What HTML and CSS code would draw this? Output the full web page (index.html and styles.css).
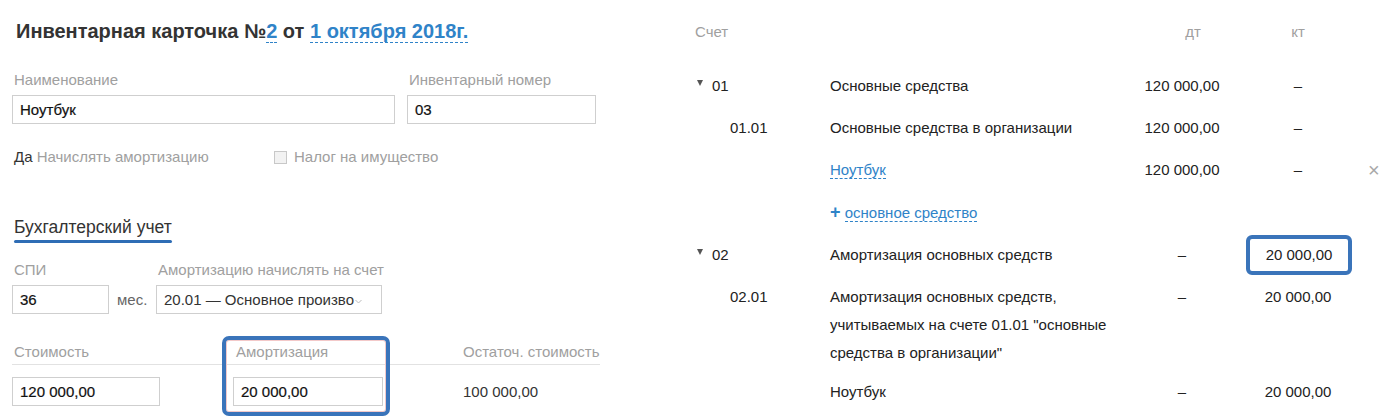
FILE: index.html
```html
<!DOCTYPE html>
<html lang="ru">
<head>
<meta charset="utf-8">
<link rel="stylesheet" href="styles.css">
</head>
<body>
<div class="page">
  <section class="left">
    <h1 class="title">Инвентарная карточка №<span class="dash">2</span> от <span class="dash">1 октября 2018г.</span></h1>

    <div class="row r1">
      <div class="field f-name">
        <div class="label">Наименование</div>
        <div class="input">Ноутбук</div>
      </div>
      <div class="field f-inv">
        <div class="label">Инвентарный номер</div>
        <div class="input">03</div>
      </div>
    </div>

    <div class="row r2">
      <div class="opt"><span class="dark">Да</span> Начислять амортизацию</div>
      <div class="chk"><span class="box"></span>Налог на имущество</div>
    </div>

    <div class="tab">Бухгалтерский учет</div>

    <div class="row r3">
      <div class="field f-spi">
        <div class="label">СПИ</div>
        <div class="spi-line">
          <div class="input spi">36</div>
          <span class="unit">мес.</span>
        </div>
      </div>
      <div class="field f-acc">
        <div class="label">Амортизацию начислять на счет</div>
        <div class="input select">20.01 — Основное произво<svg class="chev" width="7" height="5" viewBox="0 0 7 5"><path d="M0.5 1 L3.5 4 L6.5 1" fill="none" stroke="#bbb" stroke-width="1"/></svg></div>
      </div>
    </div>

    <div class="cost">
      <div class="cost-head">
        <div class="ch c1">Стоимость</div>
        <div class="ch c2">Амортизация</div>
        <div class="ch c3">Остаточ. стоимость</div>
      </div>
      <div class="cost-body">
        <div class="cb c1"><div class="input money">120 000,00</div></div>
        <div class="cb c2"><div class="input money">20 000,00</div></div>
        <div class="cb c3 rest">100 000,00</div>
      </div>
      <div class="mark"></div>
    </div>
  </section>

  <section class="right">
    <div class="tr thead">
      <div class="td code">Счет</div>
      <div class="td name"></div>
      <div class="td dt">дт</div>
      <div class="td kt">кт</div>
      <div class="td act"></div>
    </div>
    <div class="tr">
      <div class="td code"><span class="tri"></span>01</div>
      <div class="td name">Основные средства</div>
      <div class="td dt">120 000,00</div>
      <div class="td kt">–</div>
      <div class="td act"></div>
    </div>
    <div class="tr">
      <div class="td code sub">01.01</div>
      <div class="td name">Основные средства в организации</div>
      <div class="td dt">120 000,00</div>
      <div class="td kt">–</div>
      <div class="td act"></div>
    </div>
    <div class="tr">
      <div class="td code"></div>
      <div class="td name"><span class="link">Ноутбук</span></div>
      <div class="td dt">120 000,00</div>
      <div class="td kt">–</div>
      <div class="td act">×</div>
    </div>
    <div class="tr">
      <div class="td code"></div>
      <div class="td name"><span class="plus">+</span> <span class="link">основное средство</span></div>
      <div class="td dt"></div>
      <div class="td kt"></div>
      <div class="td act"></div>
    </div>
    <div class="tr">
      <div class="td code"><span class="tri"></span>02</div>
      <div class="td name">Амортизация основных средств</div>
      <div class="td dt">–</div>
      <div class="td kt"><span class="hl">20 000,00</span></div>
      <div class="td act"></div>
    </div>
    <div class="tr multi">
      <div class="td code sub">02.01</div>
      <div class="td name">Амортизация основных средств, учитываемых на счете 01.01 "основные средства в организации"</div>
      <div class="td dt">–</div>
      <div class="td kt">20 000,00</div>
      <div class="td act"></div>
    </div>
    <div class="tr">
      <div class="td code"></div>
      <div class="td name">Ноутбук</div>
      <div class="td dt">–</div>
      <div class="td kt">20 000,00</div>
      <div class="td act"></div>
    </div>
  </section>
</div>
</body>
</html>
```

FILE: styles.css
```css
* { box-sizing: border-box; }
html, body { margin: 0; padding: 0; background: #fff; }
body {
  font-family: "Liberation Sans", Arial, sans-serif;
  color: #333;
  font-size: 15px;
  overflow: hidden;
}
.page {
  display: flex;
  width: 1391px;
  height: 420px;
}
.left {
  width: 695px;
  padding-left: 12px;
}
.title {
  margin: 20px 0 0 4px;
  font-size: 20px;
  line-height: 22px;
  font-weight: bold;
  color: #333;
}
.dash {
  color: #2f83c8;
  border-bottom: 1px dashed #2f83c8;
}
.row { display: flex; }
.label {
  color: #a0a0a0;
  font-size: 15px;
  line-height: 18px;
  padding-left: 2px;
  margin-bottom: 6px;
  white-space: nowrap;
}
.input {
  height: 29px;
  border: 1px solid #cfcfcf;
  padding: 0 7px;
  line-height: 27px;
  font-size: 15px;
  color: #111;
  white-space: nowrap;
  overflow: hidden;
  -webkit-text-stroke: 0.2px #111;
}
.r1 { margin-top: 29px; gap: 12px; }
.f-name { width: 383px; }
.f-inv { width: 189px; }

.r2 {
  margin-top: 24px;
  line-height: 18px;
  color: #a0a0a0;
  padding-left: 2px;
}
.opt { width: 260px; }
.dark { color: #333; }
.chk { display: flex; align-items: center; }
.box {
  width: 13px;
  height: 13px;
  border: 1px solid #c8c8c8;
  background: #f2f2f2;
  margin-right: 7px;
}

.tab {
  display: inline-block;
  margin: 51px 0 0 2px;
  font-size: 17.5px;
  line-height: 20px;
  padding-bottom: 3px;
  color: #333;
}
.tab::after {
  content: "";
  display: block;
  height: 3px;
  margin-top: 3px;
  background: #2f6db5;
  border-radius: 2px;
}

.r3 { margin-top: 15px; gap: 0; }
.f-spi { width: 144px; }
.spi-line { display: flex; align-items: center; }
.spi { width: 97px; }
.unit { margin-left: 8px; color: #666; }
.f-acc { width: 226px; }
.select {
  padding-right: 14px;
  -webkit-text-stroke: 0;
  color: #333;
}
.chev { margin-left: 1px; vertical-align: 1px; }

.cost {
  position: relative;
  margin-top: 29px;
  width: 588px;
}
.cost-head {
  display: grid;
  grid-template-columns: 221px 230px 1fr;
  border-bottom: 1px solid #e2e2e2;
  padding-bottom: 3px;
}
.ch {
  color: #a0a0a0;
  line-height: 18px;
  white-space: nowrap;
}
.ch.c1 { padding-left: 2px; }
.ch.c2 { padding-left: 3px; }
.cost-body {
  display: grid;
  grid-template-columns: 221px 230px 1fr;
  margin-top: 12px;
}
.cb.c1 .input { width: 148px; }
.cb.c2 .input { width: 150px; }
.rest { line-height: 29px; color: #333; }
.mark {
  position: absolute;
  left: 210px;
  top: -7px;
  width: 168px;
  height: 80px;
  border: 4px solid #3a74ba;
  border-radius: 7px;
  box-shadow: inset 0 0 0 1px #f3c9c9;
}

.right {
  flex: 1;
  padding-top: 18px;
  color: #222;
}
.tr {
  display: grid;
  grid-template-columns: 135px 300px 104px 128px 1fr;
  padding: 7px 0;
  line-height: 28px;
}
.tr.multi { padding-bottom: 4px; }
.thead {
  padding: 0 0 19px 0;
  color: #a0a0a0;
}
.td { white-space: nowrap; }
.td.name { white-space: normal; padding-right: 20px; }
.code.sub { padding-left: 35px; }
.tri {
  display: inline-block;
  width: 0;
  height: 0;
  border-left: 3.5px solid transparent;
  border-right: 3.5px solid transparent;
  border-top: 6px solid #555;
  margin: 0 9px 0 2px;
  vertical-align: 5px;
}
.dt { text-align: center; }
.thead .dt { padding-left: 22px; }
.kt { text-align: center; }
.act {
  color: #a8a8a8;
  font-size: 20px;
  padding-left: 6px;
}
.link {
  color: #2f83c8;
  border-bottom: 1px dashed #2f83c8;
}
.plus {
  color: #2f83c8;
  font-weight: bold;
  font-size: 18px;
}
.hl {
  display: inline-block;
  height: 40px;
  width: 106px;
  margin-top: -6px;
  margin-bottom: -6px;
  line-height: 32px;
  border: 4px solid #3a74ba;
  border-radius: 6px;
  vertical-align: top;
  position: relative;
  left: 1px;
}
```
